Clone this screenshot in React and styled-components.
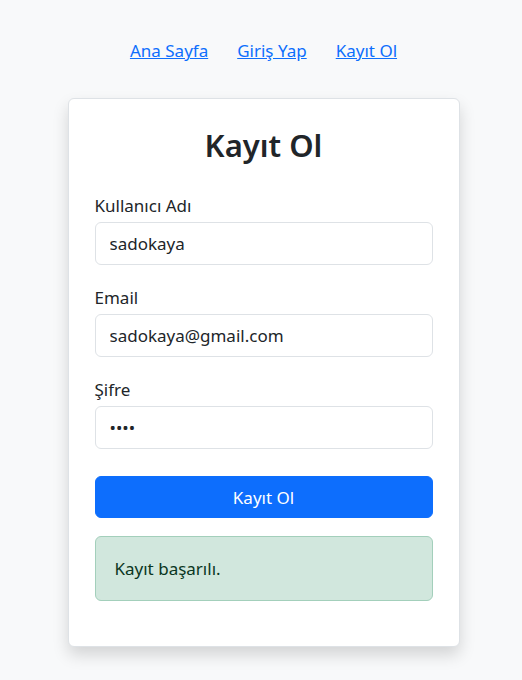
import React from "react";
import styled, { createGlobalStyle } from "styled-components";

const Global = createGlobalStyle`
  html, body { margin: 0; padding: 0; background: #f8f9fa; }
  body { font-family: "Noto Sans", "Open Sans", sans-serif; color: #212529; }
  * { box-sizing: border-box; }
`;

const Page = styled.div`
  min-height: 680px;
  padding: 36px 0 0 5px;
`;

const Nav = styled.nav`
  display: flex;
  justify-content: center;
  gap: 29px;
  height: 29px;
  align-items: center;
`;

const NavLink = styled.a`
  color: #0d6efd;
  text-decoration: underline;
  font-size: 17px;
  cursor: pointer;
`;

const Card = styled.div`
  width: 392px;
  margin: 33px auto 0;
  background: #fff;
  border: 1px solid #dee2e6;
  border-radius: 6px;
  box-shadow: 0 8px 16px rgba(0, 0, 0, 0.15);
  padding: 28px 26px 45px;
`;

const Title = styled.h2`
  margin: 0 0 29px;
  text-align: center;
  font-size: 31px;
  font-weight: 600;
  line-height: 1.2;
`;

const Field = styled.div`
  margin-bottom: 20px;
`;

const Label = styled.label`
  display: block;
  font-size: 17px;
  line-height: 26px;
  margin-bottom: 3px;
`;

const Input = styled.input`
  display: block;
  width: 100%;
  height: 43px;
  padding: 0 14px;
  font-family: inherit;
  font-size: 17px;
  color: #212529;
  background: #fff;
  border: 1px solid #dee2e6;
  border-radius: 6px;
  outline: none;
`;

const Button = styled.button`
  display: block;
  width: 100%;
  height: 42px;
  margin-top: 27px;
  background: #0d6efd;
  color: #fff;
  border: 1px solid #0d6efd;
  border-radius: 6px;
  font-family: inherit;
  font-size: 17px;
  cursor: pointer;
`;

const Alert = styled.div`
  margin-top: 18px;
  padding: 20px 19px;
  height: 65px;
  display: flex;
  align-items: center;
  background: #d1e7dd;
  border: 1px solid #a3cfbb;
  border-radius: 6px;
  color: #0a3622;
  font-size: 17px;
`;

export default function App() {
  return (
    <>
      <Global />
      <Page>
        <Nav>
          <NavLink>Ana Sayfa</NavLink>
          <NavLink>Giriş Yap</NavLink>
          <NavLink>Kayıt Ol</NavLink>
        </Nav>
        <Card>
          <Title>Kayıt Ol</Title>
          <Field>
            <Label>Kullanıcı Adı</Label>
            <Input defaultValue="sadokaya" />
          </Field>
          <Field>
            <Label>Email</Label>
            <Input defaultValue="sadokaya@gmail.com" />
          </Field>
          <Field>
            <Label>Şifre</Label>
            <Input type="password" defaultValue="1234" />
          </Field>
          <Button>Kayıt Ol</Button>
          <Alert>Kayıt başarılı.</Alert>
        </Card>
      </Page>
    </>
  );
}
